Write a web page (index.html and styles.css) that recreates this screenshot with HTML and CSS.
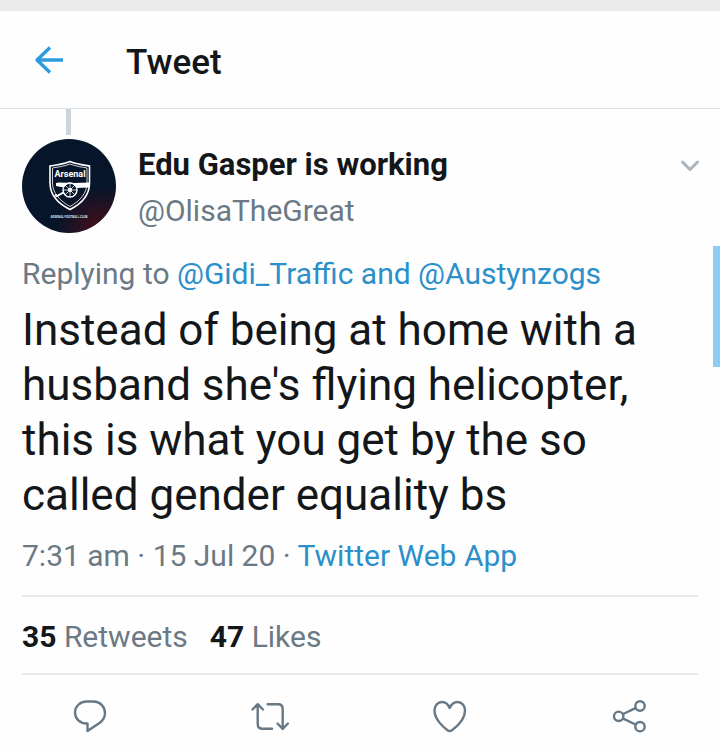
FILE: index.html
```html
<!DOCTYPE html>
<html lang="en">
<head>
<meta charset="utf-8">
<meta name="viewport" content="width=device-width, initial-scale=1">
<title>Tweet</title>
<link rel="stylesheet" href="styles.css">
</head>
<body>
<div class="status-bar"></div>
<header class="app-bar">
  <button class="icon-button back" type="button" aria-label="Back">
    <svg width="32" height="32" viewBox="0 0 32 32"><path d="M30 16H4M17 3.500L4 16L17 28.500"/></svg>
  </button>
  <h1 class="title">Tweet</h1>
</header>
<main>
  <article class="tweet">
    <div class="thread-line"></div>
    <div class="author">
      <svg class="avatar" viewBox="0 0 94 94" role="img" aria-label="Arsenal Football Club crest">
        <defs>
          <radialGradient id="glow" cx="0.85" cy="1" r="0.5">
            <stop offset="0" stop-color="#4a0f20"/>
            <stop offset="0.4" stop-color="#30101f"/>
            <stop offset="1" stop-color="#06152a"/>
          </radialGradient>
        </defs>
        <circle cx="47" cy="47" r="47" fill="url(#glow)"/>
        <path class="shield" d="M28 27C35 26 42 25 48 22.500C54 25 61 26 67.500 27V44C67.500 56 59 65 48 70.500C37 65 28 56 28 44Z"/>
        <path class="shield-inner" d="M30.500 29C37 28 43 27 48 25C53 27 59 28 65 29V44C65 54 58 62 48 67.500C38 62 30.500 54 30.500 44Z"/>
        <rect x="32" y="29" width="31" height="12" fill="#06152a"/>
        <text class="crest-name" x="48" y="38" text-anchor="middle">Arsenal</text>
        <path class="cannon" d="M34 44L37 43.500L52 44L67 43.500V48.500L54 49L39 48L34 47Z"/>
        <path class="carriage" d="M44 52L35 57L33 56"/>
        <circle class="wheel" cx="48" cy="51" r="7"/>
        <path class="spokes" d="M48 44V58M41 51H55M43 46L53 56M53 46L43 56"/>
        <circle cx="48" cy="51" r="2" fill="#fff"/>
        <text class="crest-club" x="47" y="79" text-anchor="middle">ARSENAL FOOTBALL CLUB</text>
      </svg>
      <div class="names">
        <span class="name">Edu Gasper is working</span>
        <span class="handle">@OlisaTheGreat</span>
      </div>
      <button class="icon-button more" type="button" aria-label="More">
        <svg width="16" height="14" viewBox="2 0 16 14"><path d="M2.500 3L10 10.500L17.500 3"/></svg>
      </button>
    </div>
    <p class="replying">Replying to <a href="#">@Gidi_Traffic and @Austynzogs</a></p>
    <p class="text">Instead of being at home with a husband she's flying helicopter, this is what you get by the so called gender equality bs</p>
    <p class="meta">7:31 am · 15 Jul 20 · <a href="#">Twitter Web App</a></p>
    <div class="stats">
      <span><strong>35</strong> Retweets</span>
      <span><strong>47</strong> Likes</span>
    </div>
  </article>
  <div class="actions">
    <button class="icon-button" type="button" aria-label="Reply">
      <svg width="40" height="40" viewBox="0 0 40 40"><path d="M16.500 5.500H23.500C30 5.500 35 10.500 35 17C35 21 33 24.500 29.500 27L17.500 35V27.500H16.500C10 27.500 5 23 5 16.500C5 10.500 10 5.500 16.500 5.500Z"/></svg>
    </button>
    <button class="icon-button" type="button" aria-label="Retweet">
      <svg width="40" height="40" viewBox="0 0 40 40"><path d="M2.500 13.500L7.700 8.200L12.900 13.500M7.700 8.500V28Q7.700 32.800 12.500 32.800H22M17.700 8.300H28Q32.700 8.300 32.700 13V33M27.500 27.500L32.700 32.800L37.900 27.500"/></svg>
    </button>
    <button class="icon-button" type="button" aria-label="Like">
      <svg width="40" height="40" viewBox="0 0 40 40"><path d="M19.700 12C18 8 15 6 12 6C7.500 6 4.500 10 4.500 14.800C4.500 23 13 31 17.500 34.200Q19.700 35.800 22 34.200C27 30.500 35 23 35 14.800C35 10 32 6 27.500 6C24.500 6 21.500 8 19.700 12Z"/></svg>
    </button>
    <button class="icon-button" type="button" aria-label="Share">
      <svg width="40" height="40" viewBox="0 0 40 40"><path d="M13.200 18L25.500 12.200M13.200 22.700L25.500 28.500"/><circle cx="8.700" cy="20.300" r="4.700"/><circle cx="30" cy="10" r="4.700"/><circle cx="30" cy="30.700" r="4.700"/></svg>
    </button>
  </div>
</main>
<div class="scroll-thumb"></div>
</body>
</html>
```
FILE: styles.css
```css
* {
  box-sizing: border-box;
}

body {
  margin: 0;
  background: #fefefe;
  color: #14171a;
  font-family: Roboto, "Liberation Sans", sans-serif;
  font-size: 30px;
  line-height: 46px;
  overflow-x: hidden;
}

a {
  color: #2b8fca;
  text-decoration: none;
}

p {
  margin: 0;
}

.icon-button {
  display: flex;
  padding: 0;
  border: 0;
  background: none;
  color: #667785;
}

.icon-button svg {
  fill: none;
  stroke: currentColor;
  stroke-width: 2.4;
  stroke-linecap: round;
  stroke-linejoin: round;
  overflow: visible;
}

.status-bar {
  height: 11px;
  background: #eaeaea;
}

.app-bar {
  display: flex;
  align-items: center;
  gap: 61px;
  height: 98px;
  padding: 0 33px;
  border-bottom: 1px solid #dde1e4;
}

.back {
  color: #2e9bdc;
}

.back svg {
  stroke-width: 3.4;
  stroke-linecap: butt;
}

.title {
  margin: 6px 0 0;
  font-size: 35px;
  font-weight: 500;
}

.tweet {
  padding: 0 22px;
}

.thread-line {
  width: 5px;
  height: 26px;
  margin: 0 44px 4px;
  background: #ccd6dc;
}

.author {
  display: flex;
  align-items: flex-start;
  gap: 22px;
}

.avatar {
  flex: none;
  width: 94px;
  height: 94px;
}

.shield {
  fill: none;
  stroke: #fff;
  stroke-width: 1.6;
}

.shield-inner {
  fill: none;
  stroke: #fff;
  stroke-width: 0.8;
}

.crest-name {
  fill: #fff;
  font-size: 9px;
  font-weight: 700;
}

.crest-club {
  fill: #dde0e6;
  font-size: 3px;
  font-weight: 700;
}

.cannon {
  fill: #fff;
}

.carriage {
  fill: none;
  stroke: #fff;
  stroke-width: 2;
}

.wheel {
  fill: #06152a;
  stroke: #fff;
  stroke-width: 1.4;
}

.spokes {
  stroke: #fff;
  stroke-width: 0.8;
}

.names {
  display: flex;
  flex: 1;
  flex-direction: column;
  padding-top: 3px;
}

.name {
  font-size: 31px;
  font-weight: 700;
}

.handle,
.replying,
.meta,
.stats {
  color: #6b7985;
}

.more {
  padding-top: 20px;
  color: #a9b4bd;
}

.more svg {
  stroke-width: 3;
}

.replying {
  margin-top: 17px;
}

.text {
  margin-top: 6px;
  font-size: 44px;
  line-height: 55px;
}

.meta {
  margin-top: 10px;
  padding-bottom: 16px;
}

.stats {
  display: flex;
  gap: 22px;
  padding: 17px 0 13px;
  border: solid #e8eaec;
  border-width: 2px 0;
}

.stats strong {
  color: #14171a;
}

.actions {
  display: grid;
  grid-template-columns: repeat(4, 1fr);
  justify-items: center;
  padding: 21px 0 17px;
}

.scroll-thumb {
  position: absolute;
  top: 246px;
  right: 0;
  width: 7px;
  height: 121px;
  background: #8dcdf5;
}
```
